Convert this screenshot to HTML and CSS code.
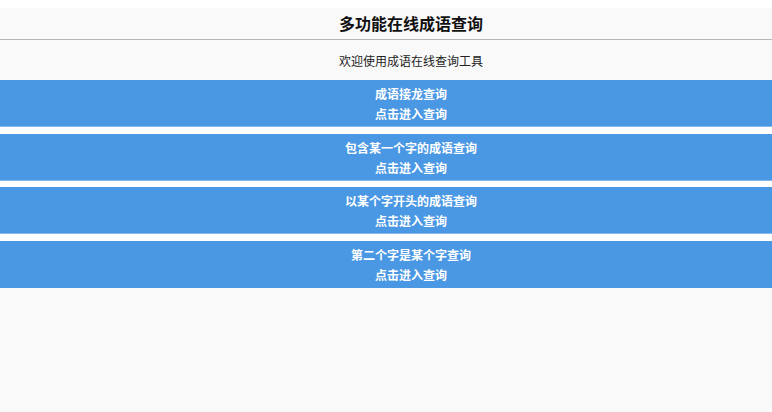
FILE: index.html
```html
<!DOCTYPE html>
<html lang="zh-CN">

<head>
  <title>多功能在线成语查询</title>
  <meta charset="utf-8" />
  <meta name="viewport" content="width=device-width, initial-scale=1" />
  <link rel="stylesheet" href="styles.css">
</head>

<body>
  <div class="page">
    <header class="bar">
      <h1>多功能在线成语查询</h1>
    </header>

    <p class="welcome">欢迎使用成语在线查询工具</p>

    <ul class="menu">
      <li><a href="#">成语接龙查询<br />点击进入查询</a></li>
      <li><a href="#">包含某一个字的成语查询<br />点击进入查询</a></li>
      <li><a href="#">以某个字开头的成语查询<br />点击进入查询</a></li>
      <li><a href="#">第二个字是某个字查询<br />点击进入查询</a></li>
    </ul>
  </div>
</body>

</html>
```

FILE: styles.css
```css
html,
body {
  margin: 0;
  background: #fff;
  font-family: "Noto Sans CJK SC", "Liberation Sans", sans-serif;
}

.page {
  margin-top: 8px;
  min-height: 404px;
  background: #f9f9f9;
}

/* the text sits a little right of the middle, as in the original */
.bar h1,
.welcome,
.menu li a {
  padding-left: 50px;
}

.bar {
  height: 31px;
  border-bottom: 1px solid #b8b8b8;
  background: #f9f9f9;
}

.bar h1 {
  margin: 0;
  font-size: 16px;
  line-height: 30px;
  text-align: center;
  color: #111;
}

.welcome {
  margin: 0;
  height: 40px;
  font-size: 12px;
  line-height: 42px;
  text-align: center;
  color: #222;
}

.menu {
  list-style: none;
  margin: 0;
  padding: 0;
  display: flex;
  flex-direction: column;
  gap: 6.67px;
  background: #fff;
}

.menu li a {
  display: block;
  box-sizing: border-box;
  height: 47px;
  padding-top: 4px;
  border-bottom: 1px solid #86b8ee;
  background: #4a98e4;
  color: #fff;
  font-size: 12px;
  font-weight: bold;
  line-height: 20px;
  text-align: center;
  text-decoration: none;
}

.menu li:last-child a {
  border-bottom: 0;
}
```
